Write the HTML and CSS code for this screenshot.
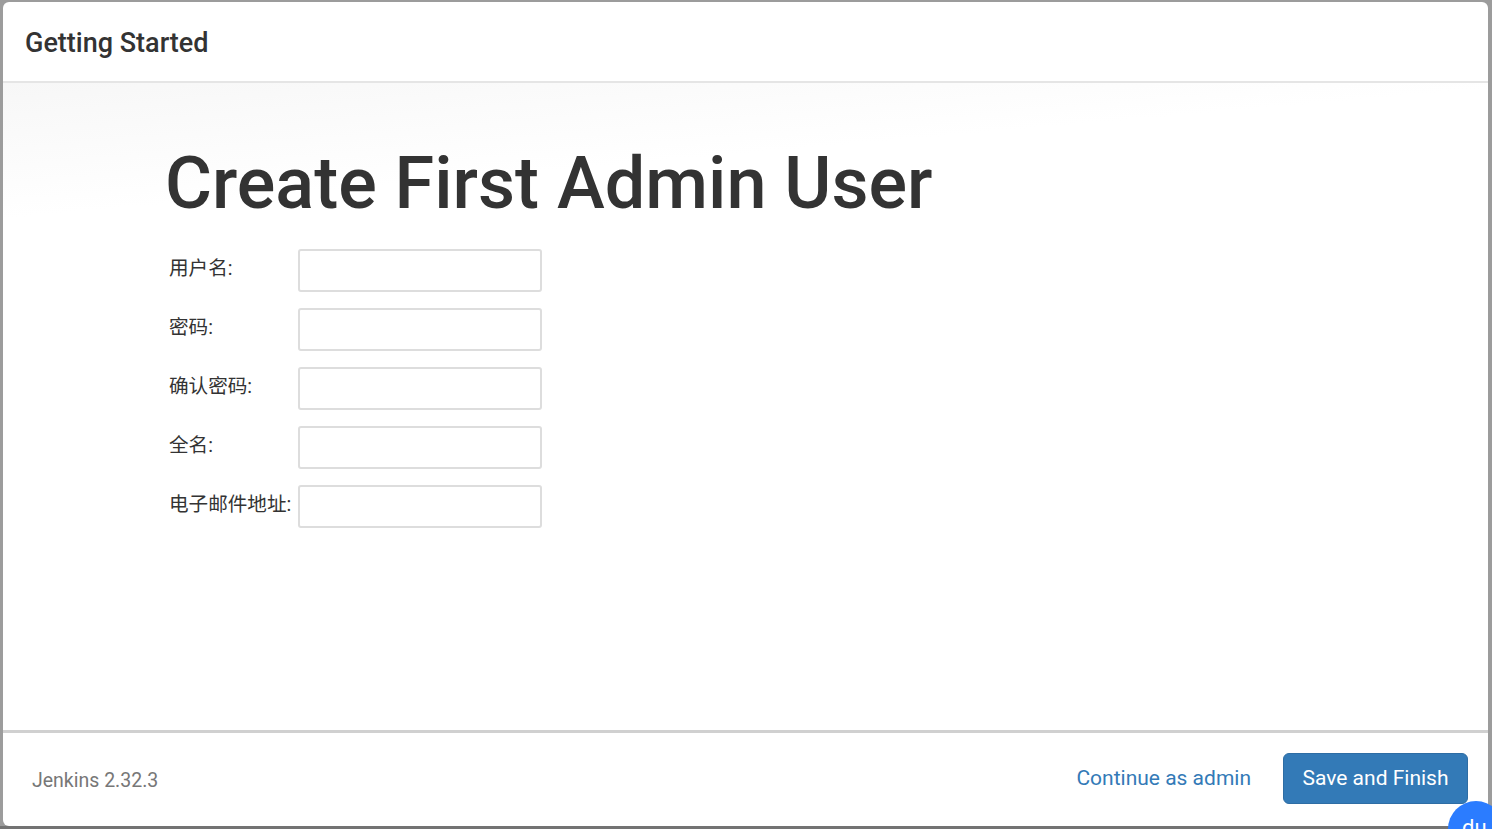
FILE: index.html
```html
<!DOCTYPE html>
<html lang="en">
<head>
<meta charset="utf-8">
<title>Getting Started</title>
<link rel="stylesheet" href="styles.css">
</head>
<body>
<div class="modal">
  <header class="modal-header"><h4 class="modal-title">Getting Started</h4></header>
  <main class="modal-body">
    <h1 class="page-title">Create First Admin User</h1>
    <form class="form-grid">
      <label class="field-label">用户名:</label><input class="field-input" type="text">
      <label class="field-label">密码:</label><input class="field-input" type="password">
      <label class="field-label">确认密码:</label><input class="field-input" type="password">
      <label class="field-label">全名:</label><input class="field-input" type="text">
      <label class="field-label">电子邮件地址:</label><input class="field-input" type="text">
    </form>
  </main>
  <footer class="modal-footer">
    <span class="version">Jenkins 2.32.3</span>
    <div class="actions">
      <a class="link-btn" href="#">Continue as admin</a>
      <button class="save-btn" type="button">Save and Finish</button>
    </div>
  </footer>
</div>
<div class="float-badge">du</div>
</body>
</html>
```
FILE: styles.css
```css
* { box-sizing: border-box; }
html, body { height: 100%; margin: 0; }
body {
  background: linear-gradient(to top, #737373 3px, #9c9c9c 3px);
  padding: 2px 4px 3px 3px;
  overflow: hidden;
  font-family: Roboto, "Noto Sans CJK SC", sans-serif;
  color: #333;
}
.modal {
  height: 100%;
  display: flex;
  flex-direction: column;
  background: #fff;
  border-radius: 6px;
  overflow: hidden;
}
.modal-header {
  height: 81px;
  flex: none;
  display: flex;
  align-items: center;
  padding: 2px 0 0 22px;
  border-bottom: 2px solid #e5e5e5;
}
.modal-title { margin: 0; font-size: 27px; font-weight: 500; line-height: 30px; color: #333; }
.modal-body {
  flex: 1;
  padding: 61px 0 0 162px;
  background: linear-gradient(175deg, #f7f7f7 0, #fff 135px);
}
.page-title { margin: 0 0 26px; font-size: 72px; font-weight: 500; line-height: 79px; color: #333; }
.form-grid {
  display: grid;
  grid-template-columns: 130px 244px;
  grid-auto-rows: 43px;
  row-gap: 16px;
  padding-left: 3px;
}
.field-label { font-size: 19.6px; line-height: 40px; padding-left: 1px; color: #333; white-space: nowrap; }
.field-input { border: 2px solid #ddd; border-radius: 3px; background: #fff; }
.modal-footer {
  height: 96px;
  flex: none;
  display: flex;
  align-items: center;
  justify-content: space-between;
  padding: 0 20px 2px 29px;
  border-top: 3px solid #d0d0d0;
}
.version { font-size: 19.5px; color: #777; margin-top: 4px; }
.actions { display: flex; align-items: center; gap: 32px; }
.link-btn { font-size: 21px; color: #337ab7; text-decoration: none; margin-bottom: 2px; }
.save-btn {
  width: 185px;
  height: 51px;
  padding: 0 0 2px;
  font: 21px Roboto, sans-serif;
  color: #fff;
  background: #337ab7;
  border: 1px solid #2e6da4;
  border-radius: 6px;
}
.float-badge {
  position: fixed;
  left: 1448px;
  top: 801px;
  width: 56px;
  height: 56px;
  border-radius: 50%;
  background: #2b7cff;
  color: #fff;
  font-size: 22px;
  line-height: 53px;
  padding-left: 14px;
}
```
